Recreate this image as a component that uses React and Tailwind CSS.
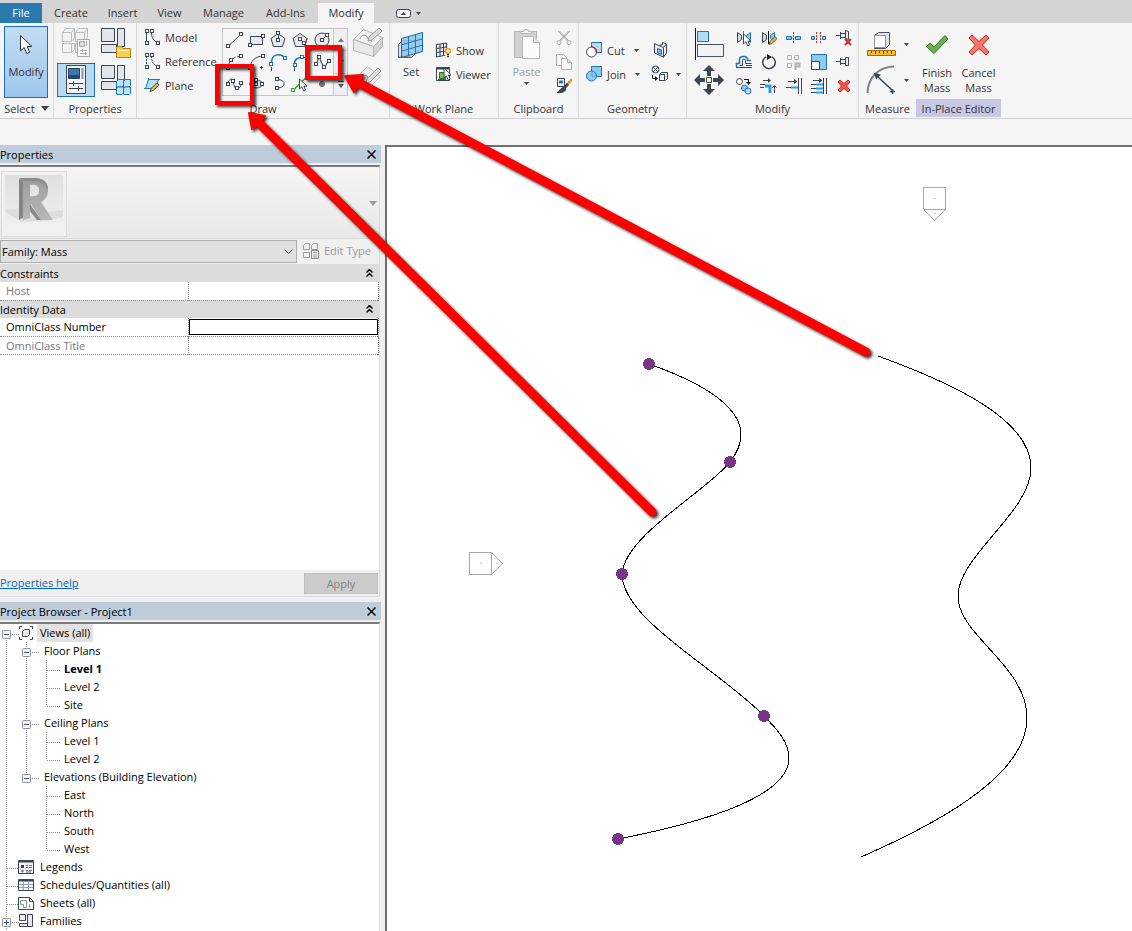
import React from "react";

const INK = "#3b4453";

function Svg({ w, h, className = "", children }) {
  return (
    <svg
      width={w}
      height={h}
      viewBox={`0 0 ${w} ${h}`}
      fill="none"
      stroke={INK}
      className={`block shrink-0 ${className}`}
      aria-hidden="true"
    >
      {children}
    </svg>
  );
}

/* Small square handle, snapped to whole pixels so that its outline stays crisp. */
function Node({ x, y, c = INK }) {
  return <rect x={Math.round(x) - 1.5} y={Math.round(y) - 1.5} width="3" height="3" fill="#fff" stroke={c} />;
}

function Caret({ className = "" }) {
  return (
    <Svg w={5} h={3} className={className}>
      <path d="M0 0h5L2.500 3z" fill="#444" stroke="none" />
    </Svg>
  );
}

/* ---------- large ribbon icons ---------- */

function CursorShape({ x = 0, y = 0 }) {
  return (
    <path
      transform={`translate(${x} ${y})`}
      d="M0 0v10l2.400-2.200 1.800 4.200 2-.9-1.800-4H7.500z"
      fill="#fff"
      stroke={INK}
    />
  );
}

const CursorIcon = () => (
  <Svg w={16} h={22}>
    <path d="M2.500 1.500v15.500l3.700-3.500 2.600 6 2.900-1.300-2.600-5.700h4.900z" fill="#fff" stroke="#2f3440" />
  </Svg>
);

const FamilyTypesIcon = () => (
  <Svg w={32} h={32}>
    <g stroke="#bdbdbd" fill="#f2f2f2">
      <path d="M2.500 5.500l3-4h9v9l-3 4h-9z" />
      <path d="M2.500 5.500h9v9M11.500 5.500l3-4" />
      <path d="M15.500 5.500l3-4h9v9l-3 4h-9z" />
      <path d="M15.500 5.500h9v9M24.500 5.500l3-4" />
      <path d="M2.500 16.500h9v9h-9zM11.500 25.500l3-3v-6h-3M15.500 16.500h3v9h-3z" />
      <path d="M17.500 12.500h12v17h-12z" fill="#f8f8f8" stroke="#a8a8a8" />
      <path d="M19.500 14.500h5v5h-5z" fill="#ddd" stroke="#a8a8a8" />
      <path d="M26.500 14v5M20 23.500h7M22.500 22v3M20 26.500h7M25.500 25v3" stroke="#a8a8a8" />
    </g>
  </Svg>
);

function PanelsIcon({ children }) {
  return (
    <Svg w={32} h={32}>
      <g fill="#e3e6eb">
        <path d="M2.500 1.500h13v13h-13z" />
        <path d="M2.500 17.500h15v8h-15z" />
        <path d="M18.500 1.500h7v18h-7z" />
      </g>
      {children}
    </Svg>
  );
}

const LoadFamilyIcon = () => (
  <PanelsIcon>
    <path d="M17.500 30.500v-10l1-1h4l1.500 2h7.500v9z" fill="#f8cf52" stroke="#b5820c" />
    <path d="M18.500 23.500h12" stroke="#fff2ba" />
  </PanelsIcon>
);

const FamilyWindowIcon = () => (
  <PanelsIcon>
    <g fill="#bfe3f5" stroke="#1c76b8">
      <path d="M17.500 17.500l2-2h5v6l-1.500 1.500h-5.500z" />
      <path d="M24.500 17.500l2-2h5v6l-1.500 1.500h-5.500z" />
      <path d="M17.500 24.500l2-1.500h5v6l-1.500 1.500h-5.500z" />
      <path d="M24.500 24.500l2-1.500h5v6l-1.500 1.500h-5.500z" />
    </g>
  </PanelsIcon>
);

const PropertiesIcon = () => (
  <Svg w={22} h={32}>
    <path d="M1.500 1.500h19v28h-19z" fill="#f5f6f8" />
    <path d="M3.500 4.500h11v10h-11z" fill="#3f77ad" stroke="#27405f" />
    <path d="M4 11h10v3H4z" fill="#1f4a78" stroke="none" />
    <path d="M17.500 4v11" strokeWidth="2" stroke="#8c93a0" />
    <path d="M4 19.500h14M8.500 17v5M4 24.500h14M13.500 22v5" />
  </Svg>
);

const SketchBoxIcon = () => (
  <Svg w={32} h={32}>
    <g stroke="#b4b4b4" fill="#e9e9e9">
      <path d="M1.500 12.500l10-10 19 8-9 9z" fill="#f1f1f1" />
      <path d="M1.500 12.500l20 7v10l-20-6z" />
      <path d="M21.500 19.500l9-9v9l-9 10z" fill="#d4d4d4" />
      <path d="M8 12c0-4 7-5 7-2s5 2 5 5" fill="none" stroke="#8f8f8f" />
      <path d="M16 14l1-4L27 1l3 3-10 9z" fill="#ddd" stroke="#999" />
    </g>
  </Svg>
);

const SketchPlaneIcon = () => (
  <Svg w={32} h={32}>
    <g stroke="#bcbcbc" fill="#ececec">
      <path d="M2.500 16.500l13-13 13 10-13 13z" />
      <path d="M10 15c1-4 6-3 6 0s4 2 4-1" fill="none" stroke="#8f8f8f" />
      <path d="M14 20l1-4L26 5l3 3-11 11z" fill="#ddd" stroke="#999" />
    </g>
  </Svg>
);

const SetIcon = () => (
  <Svg w={28} h={30}>
    <path d="M1.500 14.500l4-4h13v13l-4 4h-13z" fill="#dfe2e8" stroke="#5b6270" />
    <path d="M4.500 8.500l21-6v19l-21 6z" fill="#8ec5ea" fillOpacity=".85" stroke="#1467a8" />
    <path d="M11.500 6.500v19M18.500 4.500v19M4.500 14.800l21-6M4.500 21.100l21-6" stroke="#1f76b8" />
    <path d="M1.500 15v12h12" stroke="#5b6270" />
  </Svg>
);

const PasteIcon = () => (
  <Svg w={28} h={32}>
    <g stroke="#b6b6b6">
      <path d="M1.500 3.500h22v26h-22z" fill="#d2d2d2" />
      <path d="M7.500 5.500v-2h3l1-2h3l1 2h3v2z" fill="#f2f2f2" />
      <path d="M9.500 8.500h11l6 6v16h-17z" fill="#fbfbfb" />
      <path d="M20.500 8.500v6h6" fill="#e2e2e2" />
    </g>
  </Svg>
);

const AlignIcon = () => (
  <Svg w={30} h={32}>
    <path d="M1.500 0v32" stroke="#1a1a1a" />
    <path d="M3.500 3.500h11v10h-11z" fill="#b5dcf4" stroke="#1b74bd" />
    <path d="M3.500 16.500h26v12h-26z" fill="#f1f2f5" stroke="#4a5262" />
  </Svg>
);

const MoveIcon = () => (
  <Svg w={30} h={30}>
    <g fill={INK} stroke="none">
      <path d="M15 0l6 6h-4v5h-4V6H9zM15 30l6-6h-4v-5h-4v5H9zM0 15l6-6v4h5v4H6v4zM30 15l-6-6v4h-5v4h5v4z" />
    </g>
    <path d="M12.500 12.500h5v5h-5z" fill="#fff" />
  </Svg>
);

const MeasureIcon = () => (
  <Svg w={30} h={26}>
    <path d="M8.500 4.500l4-3h11v12l-4 4h-11z" fill="#dfe3ea" stroke="#4a5262" />
    <path d="M8.500 4.500h11v12h-11z" fill="#fff" stroke="#8b92a0" />
    <path d="M1.500 19.500h28v5h-28z" fill="#f6bf2a" stroke="#a46f00" />
    <path d="M5.500 20v2M9.500 20v3M13.500 20v2M17.500 20v3M21.500 20v2M25.500 20v3" stroke="#6d4a00" />
  </Svg>
);

const DimensionIcon = () => (
  <Svg w={30} h={30}>
    <path d="M1.500 28C2 13 12 2 28 1.500" stroke="#7b808a" strokeWidth="2" />
    <path d="M11 11l16 15M24 26.500h5M26.500 24v5" strokeWidth="1.500" />
    <path d="M8 8l7 1.500-5 5z" fill={INK} stroke="none" />
  </Svg>
);

const CheckIcon = () => (
  <Svg w={24} h={22}>
    <path d="M1.500 12.500l3.500-3.500 4 4L20 1.500l3 3.500L9 19.500z" fill="#6cb052" stroke="#2c7a1c" />
  </Svg>
);

const CancelIcon = () => (
  <Svg w={22} h={22}>
    <path
      d="M1 4l3-3 7 6.500L18 1l3 3-6.500 7 6.500 7-3 3-7-6.500L4 21l-3-3 6.500-7z"
      fill="#f8766a"
      stroke="#c4281d"
    />
  </Svg>
);

/* ---------- 16px icons ---------- */

const ModelLineIcon = () => (
  <Svg w={16} h={16}>
    <path d="M2.500 3v10M7.500 3c0 6 2 9 6 10" />
    <Node x={3} y={2} />
    <Node x={3} y={14} />
    <Node x={8} y={2} />
    <Node x={14} y={14} />
  </Svg>
);

const ReferenceLineIcon = () => (
  <Svg w={16} h={16}>
    <path d="M2.500 3v10M7.500 3c0 6 2 9 6 10" strokeDasharray="2 1" />
    <Node x={3} y={2} />
    <Node x={3} y={14} />
    <Node x={8} y={2} />
    <Node x={14} y={14} />
  </Svg>
);

const PlaneIcon = () => (
  <Svg w={16} h={16}>
    <path d="M4.500 2.500h10l-3 9h-10z" fill="#b9def4" stroke="#1b74bd" />
    <path d="M0 11.500h5M4.500 1v3M14 2.500h2" stroke="#1b74bd" />
    <path d="M6 14.500l1-3L13 6l2 2-6 5.500z" fill="#f2b84b" stroke="#5d4a2b" />
  </Svg>
);

const ShowIcon = () => (
  <Svg w={16} h={16}>
    <path d="M1.500 2.500l10-1.500v12l-10 2zM5 2v12.500M8.500 1.500v12M1.500 6.500l10-1.500M1.500 10.500l10-1.500" fill="#e5e7eb" />
    <path d="M10 6.500h6V16h-6z" fill="#f5f5f5" stroke="none" />
    <circle cx="13" cy="9" r="2.500" fill="#ffe9a8" stroke="#f29b1d" strokeWidth="1.500" />
    <path d="M12 12.500h2M12 14.500h2" strokeWidth="1.500" />
  </Svg>
);

const ViewerIcon = () => (
  <Svg w={16} h={16}>
    <path d="M1.500 1.500h13v13h-13z" fill="#fff" />
    <path d="M1 2.500h14" strokeWidth="2" />
    <path d="M4.500 6.500h6v6h-6z" fill="#7dbb57" stroke="#33701f" />
    <path d="M3 13.500h8" stroke="#33701f" />
    <CursorShape x={9} y={2} />
  </Svg>
);

const ScissorsIcon = () => (
  <Svg w={16} h={16}>
    <g stroke="#a9a9a9">
      <path d="M2 1l9.500 10M14 1L4.500 11M3.500 1l9 9.500M12.500 1l-9 9.500" />
      <circle cx="3" cy="12.500" r="2" />
      <circle cx="13" cy="12.500" r="2" />
    </g>
  </Svg>
);

const CopyClipIcon = () => (
  <Svg w={16} h={16}>
    <g stroke="#b0b0b0" fill="#f8f8f8">
      <path d="M.5.5h7l3 3v8H.5z" />
      <path d="M5.500 4.500h6l4 4v7h-10z" />
      <path d="M11.500 4.500v4h4" fill="#e2e2e2" />
    </g>
  </Svg>
);

const BrushIcon = () => (
  <Svg w={16} h={16}>
    <path d="M1.500.5h7v8h-7z" fill="#fff" />
    <path d="M3 2.500h4v3H3z" fill="#1b74bd" stroke="none" />
    <path d="M16 1l-5 6" stroke="#e0962a" strokeWidth="2.500" />
    <path d="M12 6l-4 4" strokeWidth="3" />
    <path d="M10 11c-1 3-5 4.500-9 3.500 2-.5 3-4 6-5z" fill={INK} />
  </Svg>
);

const CutIcon = () => (
  <Svg w={16} h={16}>
    <path d="M5.500.5h10v10h-10z" fill="#b5dcf4" stroke="#1b74bd" />
    <circle cx="5.500" cy="10" r="5" fill="#fff" />
    <path d="M5.500 5a5 5 0 0 1 5 5" stroke="#e81a1a" strokeWidth="1.500" />
  </Svg>
);

const JoinIcon = () => (
  <Svg w={16} h={16}>
    <path d="M5.500.5h10v10h-10z" fill="#8fc9ee" stroke="#1b74bd" />
    <circle cx="5.500" cy="10" r="5" fill="#8fc9ee" stroke="#1b74bd" />
    <path d="M6 5.500v4.500h4.500" stroke="#5ba5d6" />
  </Svg>
);

const WallCutIcon = () => (
  <Svg w={16} h={16}>
    <path d="M1.500 1.500l4 2 4-1v-2l4 1.500v9l-3 4-9-4z" fill="#eef0f4" />
    <path d="M10.500 5.500v10M10.500 5.500l3-3.500M5.500 3.500l5 2" />
    <path d="M4.500 6.500l4 1.500v4.500l-4-1.500z" fill="#6cb5e6" stroke="#1b74bd" />
  </Svg>
);

const SplitFaceIcon = () => (
  <Svg w={18} h={18}>
    <circle cx="4.500" cy="4.500" r="3.500" fill="#fff" />
    <path d="M2 2l5 5M7 2L2 7" />
    <path d="M1.500 10v3.500h3" stroke="#111" />
    <path d="M4 11v5l3-2.500z" fill="#111" stroke="none" />
    <path d="M8.500 9.500l2-2h6v6l-2 2h-6z" fill="#dfe3ea" />
    <path d="M8.500 9.500h5v6h-5z" fill="#fff" />
  </Svg>
);

const MirrorPickIcon = () => (
  <Svg w={16} h={16}>
    <path d="M1.500 2.500v10l4-3v-4z" fill="#d5d8de" />
    <path d="M7.500 1v13" stroke="#4a9a32" />
    <path d="M14.500 2.500v10l-4-3v-4z" fill="#8fc9ee" stroke="#1b74bd" />
    <CursorShape x={7.500} y={4} />
  </Svg>
);

const MirrorDrawIcon = () => (
  <Svg w={16} h={16}>
    <path d="M1.500 2.500v10l4-3v-4z" fill="#d5d8de" />
    <path d="M7.500 1v13" stroke="#111" />
    <path d="M13.500 2.500v9l-4-3v-3z" fill="#8fc9ee" stroke="#1b74bd" />
    <path d="M8 14.500l1-3 5-5 2 2-5 5z" fill="#f2b84b" stroke="#5d4a2b" />
  </Svg>
);

const SplitIcon = () => (
  <Svg w={16} h={16}>
    <path d="M.5 6.500h5v3h-5zM9.500 6.500h5v3h-5z" fill="#8fc9ee" stroke="#1b74bd" />
    <path d="M7.500 2v12" stroke="#d42020" strokeDasharray="2 1" />
    <path d="M5.500 8h4" stroke="#1b74bd" strokeDasharray="1 1" />
  </Svg>
);

const SplitGapIcon = () => (
  <Svg w={16} h={16}>
    <path d="M.5 6.500h3v3h-3zM11.500 6.500h3v3h-3z" fill="#8fc9ee" stroke="#1b74bd" />
    <path d="M5.500 2v12M9.500 2v12" stroke="#d42020" strokeDasharray="2 1" />
  </Svg>
);

const UnpinIcon = () => (
  <Svg w={18} h={18}>
    <path d="M1 6.500h4M5.500 3v7M5.500 4.500h5v4h-5M10.500 1.500l3 1v8l-3-1z" fill="#e8eaee" />
    <path d="M10 10l6 6M16 10l-6 6" stroke="#d2281e" strokeWidth="2" />
  </Svg>
);

const PinIcon = () => (
  <Svg w={16} h={16}>
    <path d="M0 7.500h4M4.500 4v7M4.500 5.500h5v4h-5M9.500 3.500h3v8h-3z" fill="#e8eaee" />
  </Svg>
);

const OffsetIcon = () => (
  <Svg w={18} h={16}>
    <path d="M1.500 13V9.500h3V5.500a3 3 0 0 1 3-3h2a3 3 0 0 1 3 3v1H16" stroke="#1b74bd" strokeWidth="1.500" />
    <path d="M1 13.500h16M4.500 11.500h3v-5a1.500 1.500 0 0 1 3 0v3h6M11 11.500h6" />
  </Svg>
);

const RotateIcon = () => (
  <Svg w={16} h={16}>
    <path d="M11 2.800A6.300 6.300 0 1 1 5 2.800" strokeWidth="1.500" />
    <path d="M6 0l5 3-5 3z" fill="#222" stroke="none" />
  </Svg>
);

const ArrayIcon = () => (
  <Svg w={16} h={16}>
    <g stroke="#b0b0b0">
      <path d="M1.500 1.500h4v4h-4zM8.500 1.500h4v4h-4zM1.500 9.500h4v4h-4z" />
      <path d="M9.500 16V9.500h4v3h-4" strokeWidth="2" />
    </g>
  </Svg>
);

const ScaleIcon = () => (
  <Svg w={16} h={16}>
    <path d="M.5.5h15v15H.5z" fill="#8fc9ee" stroke="#1b74bd" />
    <path d="M.5 7.500h8v8h-8z" fill="#f4f5f7" />
  </Svg>
);

const CopyIcon = () => (
  <Svg w={18} h={18}>
    <circle cx="4.500" cy="4.500" r="3" fill="#fff" />
    <path d="M9 2.500h4.500V5" stroke="#111" />
    <path d="M11 5h5l-2.500 3z" fill="#111" stroke="none" />
    <circle cx="9.500" cy="11" r="3" fill="#8fc9ee" stroke="#1b74bd" />
    <circle cx="13" cy="14" r="3" fill="#b5dcf4" stroke="#1b74bd" />
  </Svg>
);

const TrimCornerIcon = () => (
  <Svg w={18} h={16}>
    <path d="M3 2.500h5M0 6.500h5M0 9.500h4" />
    <path d="M8 0l3 2.500L8 5z" fill={INK} stroke="none" />
    <path d="M5 8h5v7" stroke="#2f9be0" strokeWidth="3" />
    <path d="M14.500 15V8M12.500 9.500l2-2 2 2" />
  </Svg>
);

const TrimSingleIcon = () => (
  <Svg w={16} h={16}>
    <path d="M2 3.500h7M0 9.500h6" />
    <path d="M8 1l3.500 2.500L8 6z" fill={INK} stroke="none" />
    <path d="M5 9.500h7" stroke="#2f9be0" strokeWidth="2" />
    <path d="M12.500 0v16M15.500 0v16" />
  </Svg>
);

const TrimMultiIcon = () => (
  <Svg w={16} h={16}>
    <path d="M2 2.500h7M0 6.500h5M0 10.500h5M0 14.500h5" />
    <path d="M8 0l3.500 2.500L8 5z" fill={INK} stroke="none" />
    <path d="M5 6.500h7M5 10.500h7M5 14.500h7" stroke="#2f9be0" strokeWidth="2" />
    <path d="M12.500 0v16M15.500 0v16" />
  </Svg>
);

const DeleteIcon = () => (
  <Svg w={14} h={14}>
    <path
      d="M1 3l2-2 4 3.500L11 1l2 2-3.500 4L13 11l-2 2-4-3.500L3 13l-2-2 3.500-4z"
      fill="#f0574b"
      stroke="#c4281d"
    />
  </Svg>
);

/* ---------- draw gallery ---------- */

const LINE_BLUE = "#1b74bd";

const drawTools = [
  ["Line", <g><path d="M5 17.500L18 5" /><Node x={5} y={17} /><Node x={18} y={5} /></g>],
  ["Rectangle", <g><path d="M5.500 7.500h12v8h-12z" fill="#e6e8ec" /><Node x={5} y={16} /><Node x={18} y={7} /></g>],
  ["Inscribed Polygon", <g><path d="M11 4.500l7 5-2.500 8h-9l-2.500-8z" fill="#e6e8ec" /><path d="M11.500 5v6" /><Node x={11} y={4} /><Node x={11} y={11} /></g>],
  ["Circumscribed Polygon", <g><path d="M11 4.500l7 5-2.500 8h-9l-2.500-8z" fill="#e6e8ec" /><path d="M11 10l4 4" /><path d="M18.500 9l-3 9" stroke="#e02020" strokeDasharray="2 1" /><Node x={11} y={10} /><Node x={15} y={14} /></g>],
  ["Circle", <g><circle cx="11" cy="11" r="7" fill="#e6e8ec" /><path d="M11 11l5-5" /><Node x={11} y={11} /><Node x={16} y={6} /></g>],
  ["Start-End-Radius Arc", <g><path d="M5 17c.5-7 5-11.500 13-12" strokeDasharray="6 2" /><Node x={5} y={17} /><Node x={8} y={9} /><Node x={18} y={5} /></g>],
  ["Center-ends Arc", <g><path d="M5 17c.5-7 5-11.500 13-12M15 16.500h3M16.500 15v3" /><Node x={5} y={17} /><Node x={18} y={5} /></g>],
  ["Tangent End Arc", <g><path d="M4.500 16v4" /><path d="M4.500 12C4.500 2 14 2 18 7" stroke={LINE_BLUE} strokeWidth="1.500" /><Node x={4} y={13} c={LINE_BLUE} /><Node x={18} y={7} c={LINE_BLUE} /></g>],
  ["Fillet Arc", <g><path d="M5.500 16v4M15 6.500h3" /><path d="M5.500 13C5.500 8 8 6.500 13 6.500" stroke={LINE_BLUE} strokeWidth="1.500" /><Node x={6} y={14} c={LINE_BLUE} /><Node x={13} y={6} c={LINE_BLUE} /></g>],
  ["Spline", <g><path d="M5 13C8 11 6 7 8 7s2 8 5 8 2-3 5-5" /><path d="M5 13l3-7 5 10 5-6" strokeOpacity=".6" /><Node x={5} y={13} /><Node x={8} y={6} /><Node x={13} y={16} /><Node x={18} y={10} /></g>],
  ["Spline Through Points", <g><path d="M5 11C6 4.500 10 5 10.500 9s1 6.500 3.500 6.500 4-1.500 4-5" /><Node x={5} y={11} /><Node x={10} y={8} /><Node x={14} y={15} /><Node x={18} y={10} /></g>],
  ["Ellipse", <g><ellipse cx="11" cy="11" rx="6.500" ry="4" fill="#e6e8ec" /><Node x={11} y={7} /><Node x={11} y={11} /><Node x={17} y={11} /></g>],
  ["Partial Ellipse", <g><path d="M10 6.500c9.500 0 9.500 8.500 0 8.500" /><Node x={10} y={6} /><Node x={10} y={15} /></g>],
  ["Pick Lines", <g><path d="M4 17.500l13-13" stroke="#3aa12a" strokeWidth="1.500" /><Node x={4} y={17} c="#3aa12a" /><CursorShape x={10.500} y={6} /></g>],
  ["Point Element", <circle cx="11" cy="11" r="2.500" fill="#777c86" stroke="#555a64" />],
];

/* ---------- ribbon building blocks ---------- */

function Panel({ label, className = "", divider = true, children }) {
  return (
    <section className={`flex shrink-0 flex-col pb-[2px] ${divider ? "border-r border-[#d9d9d9]" : ""} ${className}`}>
      <div className="flex h-[77px] items-start">{children}</div>
      <h2 className="flex h-[16px] items-center justify-center whitespace-nowrap">{label}</h2>
    </section>
  );
}

function ToolButton({ icon, label, caret, className = "" }) {
  return (
    <button type="button" className={`flex h-[24px] items-center gap-[5px] whitespace-nowrap ${className}`}>
      {icon}
      <span>{label}</span>
      {caret && <Caret className="ml-[4px]" />}
    </button>
  );
}

function IconButton({ label, className = "", children }) {
  return (
    <button type="button" aria-label={label} className={`flex items-center justify-center ${className}`}>
      {children}
    </button>
  );
}

const modifyTools = [
  ["Mirror - Pick Axis", <MirrorPickIcon />],
  ["Mirror - Draw Axis", <MirrorDrawIcon />],
  ["Split Element", <SplitIcon />],
  ["Split with Gap", <SplitGapIcon />],
  ["Unpin", <UnpinIcon />],
  ["Offset", <OffsetIcon />],
  ["Rotate", <RotateIcon />],
  ["Array", <ArrayIcon />],
  ["Scale", <ScaleIcon />],
  ["Pin", <PinIcon />],
  ["Copy", <CopyIcon />],
  ["Trim/Extend to Corner", <TrimCornerIcon />],
  ["Trim/Extend Single Element", <TrimSingleIcon />],
  ["Trim/Extend Multiple Elements", <TrimMultiIcon />],
  ["Delete", <DeleteIcon />],
];

function TabBar() {
  const tabs = [
    ["Create", "w-[58px]"],
    ["Insert", "w-[45px]"],
    ["View", "w-[49px]"],
    ["Manage", "w-[59px]"],
    ["Add-Ins", "w-[65px]"],
  ];
  return (
    <nav className="flex h-[23px] shrink-0 items-end bg-[#d4d4d4]">
      <button type="button" className="h-[20px] w-[42px] bg-[#2a7ab0] pb-[2px] text-white">File</button>
      {tabs.map(([name, width]) => (
        <button key={name} type="button" className={`h-[20px] pb-[2px] ${width}`}>{name}</button>
      ))}
      <button type="button" className="h-[20px] w-[56px] bg-[#f5f5f5] pb-[2px]">Modify</button>
      <button type="button" aria-label="Minimize ribbon" className="ml-[22px] flex h-[19px] items-center gap-[5px]">
        <Svg w={15} h={9}>
          <rect x=".5" y=".5" width="14" height="8" rx="2" fill="#f5f5f5" />
          <path d="M5 6h5L7.500 3z" fill={INK} stroke="none" />
        </Svg>
        <Caret />
      </button>
    </nav>
  );
}

function Ribbon() {
  return (
    <div className="flex h-[96px] shrink-0 overflow-hidden border-b border-[#d0d0d0] bg-[#f5f5f5]">
      <Panel
        className="w-[54px]"
        label={<button type="button" className="flex items-center gap-[6px]">Select <Svg w={8} h={5}><path d="M0 0h8L4 5z" fill="#444" stroke="none" /></Svg></button>}
      >
        <button
          type="button"
          className="mt-[3px] ml-[4px] flex h-[72px] w-[44px] flex-col items-center gap-[8px] border border-[#1a6fc0] bg-linear-to-b from-[#c3dcf3] to-[#9dc8ee] pt-[7px]"
        >
          <CursorIcon />
          <span>Modify</span>
        </button>
      </Panel>

      <Panel label="Properties" className="w-[83px]">
        <div className="grid grid-cols-2 gap-x-[4px] pt-[3px] pl-[3px]">
          <IconButton label="Family Types" className="h-[34px] w-[38px]"><FamilyTypesIcon /></IconButton>
          <IconButton label="Load Family" className="h-[34px] w-[36px] pr-[4px]"><LoadFamilyIcon /></IconButton>
          <IconButton label="Properties" className="mt-[3px] h-[34px] w-[38px] border border-[#1a6fc0] bg-[#b9d8f2]">
            <PropertiesIcon />
          </IconButton>
          <IconButton label="Family window" className="mt-[3px] h-[34px] w-[36px] pr-[4px]"><FamilyWindowIcon /></IconButton>
        </div>
      </Panel>

      <Panel label="Draw" className="w-[253px]">
        <div className="w-[85px] pt-[2px] pl-[7px]">
          <ToolButton icon={<ModelLineIcon />} label="Model" />
          <ToolButton icon={<ReferenceLineIcon />} label="Reference" />
          <ToolButton icon={<PlaneIcon />} label="Plane" />
        </div>
        <div className="mt-[5px] flex border border-[#c6c6c6]">
          <div className="grid grid-cols-5">
            {drawTools.map(([name, art]) => (
              <IconButton key={name} label={name} className="h-[22px] w-[22px]">
                <Svg w={22} h={22}>{art}</Svg>
              </IconButton>
            ))}
          </div>
          <div className="flex w-[14px] flex-col border-l border-[#c6c6c6] bg-[#efefef]">
            <IconButton label="Scroll up" className="flex-1"><Svg w={6} h={4}><path d="M0 4h6L3 0z" fill="#777" stroke="none" /></Svg></IconButton>
            <IconButton label="Scroll down" className="flex-1 border-y border-[#d0d0d0]"><Svg w={6} h={4}><path d="M0 0h6L3 4z" fill="#777" stroke="none" /></Svg></IconButton>
            <IconButton label="More" className="flex-1"><Svg w={6} h={7}><path d="M0 .5h6" /><path d="M0 3h6L3 7z" fill="#555" stroke="none" /></Svg></IconButton>
          </div>
        </div>
        <div className="flex flex-col gap-[4px] pt-[4px] pl-[4px]">
          <IconButton label="Draw on Face"><SketchBoxIcon /></IconButton>
          <IconButton label="Draw on Work Plane"><SketchPlaneIcon /></IconButton>
        </div>
      </Panel>

      <Panel label="Work Plane" className="w-[109px]">
        <button type="button" className="flex w-[42px] flex-col items-center gap-[4px] pt-[7px]">
          <SetIcon />
          <span>Set</span>
        </button>
        <div className="pt-[15px] pl-[3px]">
          <ToolButton icon={<ShowIcon />} label="Show" />
          <ToolButton icon={<ViewerIcon />} label="Viewer" />
        </div>
      </Panel>

      <Panel label="Clipboard" className="w-[80px]">
        <button type="button" className="flex w-[55px] flex-col items-center pt-[5px] text-[#a0a0a0]">
          <PasteIcon />
          <span className="mt-[4px]">Paste</span>
          <Caret className="mt-[3px]" />
        </button>
        <div className="pt-[3px]">
          <IconButton label="Cut" className="h-[24px] w-[20px]"><ScissorsIcon /></IconButton>
          <IconButton label="Copy to Clipboard" className="h-[24px] w-[20px]"><CopyClipIcon /></IconButton>
          <IconButton label="Match Type" className="h-[24px] w-[20px]"><BrushIcon /></IconButton>
        </div>
      </Panel>

      <Panel label="Geometry" className="w-[108px]">
        <div className="w-[70px] pt-[15px] pl-[7px]">
          <ToolButton icon={<CutIcon />} label="Cut" caret />
          <ToolButton icon={<JoinIcon />} label="Join" caret />
        </div>
        <div className="pt-[15px]">
          <IconButton label="Wall Joins" className="h-[24px] w-[24px]"><WallCutIcon /></IconButton>
          <button type="button" aria-label="Split Face" className="flex h-[24px] items-center gap-[7px] pl-[2px]">
            <SplitFaceIcon />
            <Caret />
          </button>
        </div>
      </Panel>

      <Panel label="Modify" className="w-[172px]">
        <div className="flex flex-col gap-[5px] pt-[5px] pl-[7px]">
          <IconButton label="Align"><AlignIcon /></IconButton>
          <IconButton label="Move"><MoveIcon /></IconButton>
        </div>
        <div className="grid grid-cols-5 pt-[3px] pl-[7px]">
          {modifyTools.map(([name, art]) => (
            <IconButton key={name} label={name} className="h-[24px] w-[25px]">{art}</IconButton>
          ))}
        </div>
      </Panel>

      <Panel label="Measure" className="w-[57px]" divider={false}>
        <div className="flex flex-col gap-[8px] pt-[8px] pl-[7px]">
          <button type="button" aria-label="Measure" className="flex items-center gap-[8px]"><MeasureIcon /><Caret /></button>
          <button type="button" aria-label="Dimension" className="flex items-center gap-[8px]"><DimensionIcon /><Caret /></button>
        </div>
      </Panel>

      <Panel
        divider={false}
        className="w-[85px]"
        label={<span className="flex h-[18px] w-full items-center justify-center bg-[#c8c8e4]">In-Place Editor</span>}
      >
        <button type="button" className="flex w-[42px] flex-col items-center gap-[9px] pt-[11px] leading-[15px]">
          <CheckIcon />
          <span>Finish<br />Mass</span>
        </button>
        <button type="button" className="flex w-[41px] flex-col items-center gap-[9px] pt-[11px] leading-[15px]">
          <CancelIcon />
          <span>Cancel<br />Mass</span>
        </button>
      </Panel>
    </div>
  );
}

/* ---------- side panels ---------- */

function TitleBar({ title }) {
  return (
    <div className="flex h-[18px] shrink-0 items-center justify-between bg-[#bfcddb] pr-[5px]">
      <h2>{title}</h2>
      <button type="button" aria-label={`Close ${title}`} className="flex h-[10px] w-[10px] items-center justify-center">
        <Svg w={9} h={9}><path d="M.5.5l8 8M8.500.5l-8 8" stroke="#000" strokeWidth="1.500" /></Svg>
      </button>
    </div>
  );
}

function FamilyThumbnail() {
  return (
    <div className="border border-[#dcdcdc] bg-[#f0f0f0]">
      <svg width="64" height="64" viewBox="0 0 64 64" className="block" aria-hidden="true">
        <defs>
          <linearGradient id="thumb" x1="0" y1="0" x2="0" y2="1">
            <stop offset="0" stopColor="#dfdfdf" />
            <stop offset="1" stopColor="#f2f2f2" />
          </linearGradient>
          <linearGradient id="face" x1="0" y1="0" x2="0" y2="1">
            <stop offset="0" stopColor="#9c9c9c" />
            <stop offset="1" stopColor="#b8b8b8" />
          </linearGradient>
        </defs>
        <rect x="3" y="3" width="58" height="58" fill="url(#thumb)" />
        <path d="M3 38l14-2 26 4 18-2v7L44 49 20 50 3 40z" fill="#dedede" />
        <path d="M17 7l5 2v36l-5 3z" fill="#858585" />
        <path fillRule="evenodd" d="M17 6h15c9 0 14 4 14 12 0 6-3 10-7 12l12 18H39L29 32h-1v14l-6 2h-1V10zM28 13v11c8 1 9-2 9-6s-3-6-9-5z" fill="url(#face)" />
        <path d="M17 6h15c9 0 14 4 14 12l-3-4c-3-4-7-5-13-5h-9z" fill="#8c8c8c" />
        <path d="M28 32l11 16h-4l-7-9z" fill="#8a8a8a" />
      </svg>
    </div>
  );
}

function GroupRow({ name }) {
  return (
    <tr className="h-[18px] bg-[#dcdcdc]">
      <th colSpan={2} scope="colgroup" className="p-0 text-left font-normal">
        <button type="button" className="flex w-full items-center justify-between pr-[6px]">
          {name}
          <Svg w={7} h={8}><path d="M.5 3.500l3-3 3 3M.5 7.500l3-3 3 3" stroke="#000" strokeWidth="1.500" /></Svg>
        </button>
      </th>
    </tr>
  );
}

function PropertyRow({ id, name, active }) {
  return (
    <tr className="h-[18px] border-b border-dotted border-[#8a8a8a]">
      <th scope="row" className={`p-0 pl-[6px] text-left font-normal ${active ? "text-black" : "text-[#777]"}`}>
        <label htmlFor={id}>{name}</label>
      </th>
      <td className="border-x border-dotted border-[#8a8a8a] p-0">
        <input
          id={id}
          disabled={!active}
          className={`block h-[16px] w-full px-[3px] outline-none ${active ? "border border-black" : ""}`}
        />
      </td>
    </tr>
  );
}

function PropertiesPanel() {
  return (
    <section className="flex min-h-0 flex-[452_1_0%] flex-col overflow-hidden pb-[5px]">
      <TitleBar title="Properties" />
      <div className="mt-[2px] mr-[1px] flex min-h-0 flex-1 flex-col border-t-2 border-r border-t-[#7a7a7a] border-r-[#dcdcdc]">
        <button
          type="button"
          aria-label="Type selector"
          className="flex h-[72px] shrink-0 items-center justify-between border-b border-[#d9d9d9] bg-linear-to-b from-[#f5f5f5] to-[#e8e8e8] pt-[2px] pr-[2px] pl-[1px]"
        >
          <FamilyThumbnail />
          <Svg w={8} h={5}><path d="M0 0h8L4 5z" fill="#9a9a9a" stroke="none" /></Svg>
        </button>
        <div className="flex h-[25px] shrink-0 items-center bg-[#f0f0f0]">
          <div className="relative w-[297px]">
            <select
              aria-label="Family"
              defaultValue="mass"
              className="block h-[23px] w-full appearance-none border border-[#adadad] bg-[#e1e1e1] pl-[1px] text-black"
            >
              <option value="mass">Family: Mass</option>
            </select>
            <svg width="9" height="6" viewBox="0 0 9 6" fill="none" stroke="#444" className="pointer-events-none absolute top-[9px] right-[4px]" aria-hidden="true">
              <path d="M.5.5l4 4 4-4" />
            </svg>
          </div>
          <button type="button" className="ml-[6px] flex items-center gap-[5px] pb-[2px] text-[#9b9b9b]">
            <Svg w={16} h={16}>
              <path d="M.5 2.500l2-2h4v6h-6zM8.500 2.500l2-2h4v6h-6zM.5 9.500h6v5h-6z" stroke="#9b9b9b" />
              <path d="M8.500 7.500h7v8h-7z" fill="#f0f0f0" stroke="#8a8a8a" />
              <path d="M10 9.500h4M10 12h4M10 14h4" stroke="#9b9b9b" />
            </Svg>
            Edit Type
          </button>
        </div>
        <div className="min-h-0 flex-1 bg-white">
          <table className="w-full table-fixed border-collapse">
            <colgroup>
              <col className="w-[188px]" />
              <col />
            </colgroup>
            <tbody>
              <GroupRow name="Constraints" />
              <PropertyRow id="host" name="Host" />
              <GroupRow name="Identity Data" />
              <PropertyRow id="omni-number" name="OmniClass Number" active />
              <PropertyRow id="omni-title" name="OmniClass Title" />
            </tbody>
          </table>
        </div>
        <div className="flex h-[27px] shrink-0 items-center justify-between border-b border-[#dcdcdc] bg-[#f0f0f0] pr-[1px]">
          <a href="#help" className="pb-[2px] text-[#0066cc] underline">Properties help</a>
          <button type="button" disabled className="h-[21px] w-[74px] border border-[#bfbfbf] bg-[#cccccc] text-[#838383]">
            Apply
          </button>
        </div>
      </div>
    </section>
  );
}

/* Guide cells, one per depth: "|" through line, "+" branch, "L" last branch,
   "-" open toggle, "=" last open toggle, "^" first open toggle, "p" closed toggle, " " nothing. */
function Guide({ kind }) {
  const dots = { stroke: "#8c8c8c", strokeDasharray: "1 1" };
  const toggle = "-=^p".includes(kind);
  return (
    <Svg w={20} h={18}>
      {kind !== " " && (
        <path d={kind === "^" ? "M6.500 10v8" : "L=".includes(kind) ? "M6.500 0v10" : "M6.500 0v18"} {...dots} />
      )}
      {"+L".includes(kind) && <path d="M7 10.500h13" {...dots} />}
      {toggle && (
        <g>
          <path d="M12 10.500h8" {...dots} />
          <rect x="2.500" y="6.500" width="8" height="8" rx="1" fill="#f6f6f6" stroke="#919191" />
          <path d={kind === "p" ? "M4 10.500h5M6.500 8v5" : "M4 10.500h5"} stroke="#3257a8" />
        </g>
      )}
    </Svg>
  );
}

const ViewsIcon = () => (
  <Svg w={16} h={16}>
    <path d="M1.500 4V1.500H4M12 1.500h2.500V4M14.500 12v2.500H12M4 14.500H1.500V12" />
    <path d="M4.500 6.500l2-2h5v5l-2 2h-5z" fill="#e6e8ec" />
  </Svg>
);
const LegendsIcon = () => (
  <Svg w={16} h={16}>
    <path d="M.5 1.500h15v13H.5z" fill="#eef0f3" />
    <path d="M1 2.500h14" strokeWidth="2" />
    <path d="M3 6h3v3H3z" fill={INK} stroke="none" />
    <circle cx="4.500" cy="12" r="1.500" fill="#8a909c" stroke="none" />
    <path d="M8 6.500h2M11 6.500h3M8 8.500h2M11 8.500h3M8 11.500h2M11 11.500h3M8 13h5" stroke="#6b7280" />
  </Svg>
);
const SchedulesIcon = () => (
  <Svg w={16} h={16}>
    <path d="M.5 2.500h15v11H.5z" fill="#f4f5f7" />
    <path d="M1 3.500h14" strokeWidth="2" />
    <path d="M1 7.500h14M1 10.500h14M5.500 5v8M10.500 5v8" stroke="#9aa0ac" />
  </Svg>
);
const SheetsIcon = () => (
  <Svg w={16} h={16}>
    <path d="M.5 2.500h11l4 4v8H.5z" fill="#fff" />
    <path d="M11.500 2.500v4h4" />
    <path d="M2.500 5.500h6v7h-3v-3h-3zM11.500 9v4" stroke="#8a909c" />
  </Svg>
);
const FamiliesIcon = () => (
  <Svg w={16} h={16}>
    <path d="M1.500 1.500h6v6h-6zM9.500 1.500h5v12h-5zM1.500 10.500h8v3h-8z" fill="#e9ebef" />
  </Svg>
);

const tree = [
  { guides: "^", label: "Views (all)", icon: <ViewsIcon />, selected: true },
  { guides: "|-", label: "Floor Plans" },
  { guides: "||+", label: "Level 1", bold: true },
  { guides: "||+", label: "Level 2" },
  { guides: "||L", label: "Site" },
  { guides: "|-", label: "Ceiling Plans" },
  { guides: "||+", label: "Level 1" },
  { guides: "||L", label: "Level 2" },
  { guides: "|=", label: "Elevations (Building Elevation)" },
  { guides: "| +", label: "East" },
  { guides: "| +", label: "North" },
  { guides: "| +", label: "South" },
  { guides: "| L", label: "West" },
  { guides: "+", label: "Legends", icon: <LegendsIcon /> },
  { guides: "+", label: "Schedules/Quantities (all)", icon: <SchedulesIcon /> },
  { guides: "+", label: "Sheets (all)", icon: <SheetsIcon /> },
  { guides: "p", label: "Families", icon: <FamiliesIcon /> },
];

function ProjectBrowser() {
  return (
    <section className="flex min-h-0 flex-[329_1_0%] flex-col overflow-hidden">
      <TitleBar title="Project Browser - Project1" />
      <div className="mt-[2px] mr-[1px] min-h-0 flex-1 overflow-hidden border-t-2 border-r border-t-[#7a7a7a] border-r-[#dcdcdc] bg-white">
        <ul role="tree">
          {tree.map((row, i) => (
            <li key={i} role="treeitem" className="flex h-[18px] items-center whitespace-nowrap">
              {row.guides.split("").map((kind, depth) => (
                <Guide key={depth} kind={kind} />
              ))}
              {row.icon && <span className="-ml-[2px]">{row.icon}</span>}
              <span
                className={`flex h-[18px] items-center pb-[2px] ${row.icon ? "ml-[3px] px-[3px]" : "pl-[4px]"} ${row.bold ? "font-bold" : ""} ${row.selected ? "bg-[#e2e2e2]" : ""}`}
              >
                {row.label}
              </span>
            </li>
          ))}
        </ul>
      </div>
    </section>
  );
}

/* ---------- drawing area ---------- */

const points = [[649, 364], [730, 462], [622, 574], [764, 716], [618, 839]];

function DrawingArea() {
  return (
    <main className="relative min-w-0 flex-1 overflow-hidden border-t-2 border-l-2 border-[#6f6f6f] bg-white">
      <svg width="745" height="784" viewBox="387 147 745 784" fill="none" shapeRendering="crispEdges" className="absolute top-0 left-0" aria-label="Mass sketch">
        <g stroke="#000">
          <path d="M649 364C700 382 741 405 741 435C741 446 736 454 730 462C706 492 625 535 622 574C622 620 720 670 764 716C778 730 789 743 789 758C789 800 690 825 618 839" />
          <path d="M878 356C955 384 1031 420 1031 468C1031 512 958 556 958 596C958 636 1027 665 1027 718C1027 770 955 816 861 857" />
        </g>
        {points.map(([x, y]) => (
          <circle key={x} cx={x} cy={y} r="6" fill="#783487" />
        ))}
        <g stroke="#a8a8a8">
          <path d="M923.500 187.500h22v22h-22zM469.500 552.500h22v22h-22z" />
          <path d="M924 210l10.500 10.500L945 210M492 553l10.500 10.500L492 574" />
          <path d="M934 198.500h2M934 213.500h2M480 563.500h2M496 563.500h2" stroke="#ccc" />
        </g>
      </svg>
    </main>
  );
}

function Callouts() {
  return (
    <svg
      width="1132"
      height="931"
      viewBox="0 0 1132 931"
      fill="none"
      stroke="#ff0000"
      className="pointer-events-none absolute top-0 left-0"
      aria-hidden="true"
    >
      <defs>
        <filter id="callout-shadow" x="0" y="0" width="1132" height="931" filterUnits="userSpaceOnUse" colorInterpolationFilters="sRGB">
          <feDropShadow dx="2" dy="2" stdDeviation="1.500" floodColor="#000" floodOpacity="0.8" />
        </filter>
      </defs>
      <g filter="url(#callout-shadow)">
        <rect x="217" y="66" width="35" height="37" strokeWidth="4" />
        <rect x="307" y="47" width="33" height="31" strokeWidth="4" />
        <path d="M357 82L866 352M257 121L652 512" strokeWidth="9" strokeLinecap="round" />
        <path d="M345 76l18-1-9 17zM249 113l16 3-13 13z" fill="#ff0000" strokeWidth="2" strokeLinejoin="round" />
      </g>
    </svg>
  );
}

export default function App() {
  return (
    <div className="relative flex h-screen flex-col overflow-hidden bg-[#f5f5f5] font-['Open_Sans','Noto_Sans',sans-serif] text-[11px] leading-[15px] text-[#333]">
      <TabBar />
      <Ribbon />
      <div className="h-[26px] shrink-0 bg-[#f5f5f5]" />
      <div className="flex min-h-0 flex-1 bg-[#f0f0f0] text-black">
        <aside className="mr-[4px] flex w-[381px] shrink-0 flex-col">
          <PropertiesPanel />
          <ProjectBrowser />
        </aside>
        <DrawingArea />
      </div>
      <Callouts />
    </div>
  );
}
